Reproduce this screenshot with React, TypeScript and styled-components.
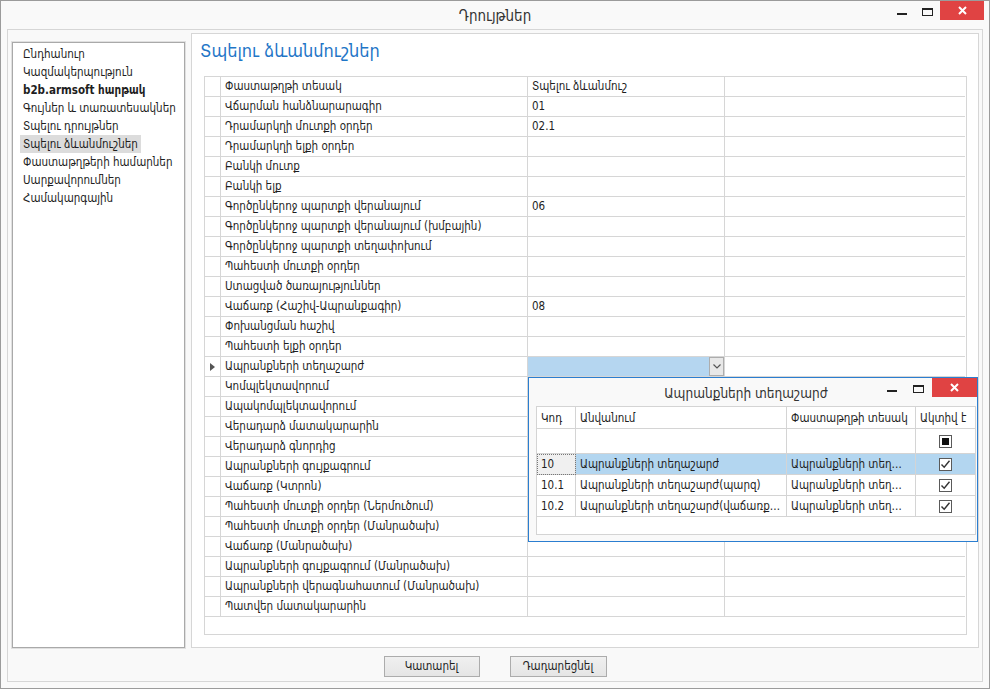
import React from 'react';
import styled, { createGlobalStyle } from 'styled-components';

const GlobalStyle = createGlobalStyle`
  html, body {
    margin: 0;
    padding: 0;
    background: #ffffff;
  }
  * {
    box-sizing: border-box;
  }
`;

const Window = styled.div`
  position: relative;
  width: 990px;
  height: 689px;
  border: 1px solid #9b9b9b;
  background: #f9f9f9;
  display: flex;
  flex-direction: column;
  font-family: 'DejaVu Sans Condensed', 'DejaVu Sans', sans-serif;
  font-stretch: condensed;
  font-size: 11.5px;
  color: #1e1e1e;
  overflow: hidden;
`;

const TitleBar = styled.div<{ $height: number }>`
  height: ${(p) => p.$height}px;
  flex: none;
  display: grid;
  grid-template-columns: 1fr auto 1fr;
  align-items: start;
`;

const TitleText = styled.div<{ $size: number; $top: number; $shift?: number }>`
  grid-column: 2;
  font-size: ${(p) => p.$size}px;
  line-height: 20px;
  padding-top: ${(p) => p.$top}px;
  margin-right: ${(p) => p.$shift ?? 0}px;
  color: #333;
  white-space: nowrap;
`;

const Controls = styled.div<{ $right: number }>`
  grid-column: 3;
  justify-self: end;
  display: flex;
  margin-right: ${(p) => p.$right}px;
`;

const CtrlButton = styled.div<{ $w: number; $close?: boolean }>`
  width: ${(p) => p.$w}px;
  height: 19px;
  display: flex;
  justify-content: center;
  background: ${(p) => (p.$close ? '#e04343' : 'transparent')};
  padding-top: ${(p) => (p.$close ? '5px' : '6px')};
`;

const Frame = styled.div`
  flex: 1;
  margin: 0 6px 6px 6px;
  border: 1px solid #d6d6d6;
  display: flex;
  flex-direction: column;
`;

const Panels = styled.div`
  height: 618px;
  padding: 3px 3px 0 3px;
  display: flex;
  gap: 6px;
`;

const LeftPanel = styled.div`
  width: 174px;
  display: flex;
  flex-direction: column;
  padding-top: 9px;
`;

const MenuList = styled.div`
  flex: 1;
  margin-left: 1px;
  border: 1px solid #a9a9a9;
  box-shadow: 0 0 0 1px #e0e0e0;
  background: #ffffff;
  padding: 2px 0 0 7px;
  display: flex;
  flex-direction: column;
  align-items: flex-start;
`;

const MenuItem = styled.div<{ $active?: boolean; $bold?: boolean }>`
  height: 18px;
  line-height: 18px;
  padding: 0 3px;
  white-space: nowrap;
  font-weight: ${(p) => (p.$bold ? 700 : 400)};
  background: ${(p) => (p.$active ? '#dcdcdc' : 'transparent')};
`;

const RightPanel = styled.div`
  width: 788px;
  border: 1px solid #d6d6d6;
  background: #ffffff;
  display: flex;
  flex-direction: column;
`;

const Heading = styled.div`
  font-size: 18px;
  line-height: 24px;
  padding: 5px 0 0 8px;
  margin-bottom: 13px;
  color: #1f76c7;
`;

const Grid = styled.div`
  margin: 0 11px 12px 12px;
  height: 559px;
  border: 1px solid #d6d6d6;
  display: grid;
  grid-template-columns: 16px 307px 197px 240px;
  grid-auto-rows: 20px;
  align-content: start;
`;

const Cell = styled.div<{ $last?: boolean; $selected?: boolean }>`
  position: relative;
  border-bottom: 1px solid #d6d6d6;
  border-right: ${(p) => (p.$last ? 'none' : '1px solid #d6d6d6')};
  padding-left: 4px;
  line-height: 19px;
  white-space: nowrap;
  overflow: hidden;
  background: ${(p) => (p.$selected ? '#b5d6f0' : 'transparent')};
`;

const RowHead = styled(Cell)`
  padding: 0;
  display: flex;
  align-items: center;
  justify-content: center;
`;

const DropButton = styled.div`
  position: absolute;
  right: 0;
  top: 0;
  width: 15px;
  height: 19px;
  border: 1px solid #adadad;
  background: #e8e8e8;
  display: flex;
  align-items: center;
  justify-content: center;
`;

const ButtonBar = styled.div`
  flex: 1;
  display: flex;
  justify-content: center;
  gap: 30px;
  padding-top: 8px;
`;

const Button = styled.div<{ $w: number }>`
  width: ${(p) => p.$w}px;
  height: 21px;
  border: 1px solid #acacac;
  background: linear-gradient(#f0f0f0, #e5e5e5);
  line-height: 19px;
  text-align: center;
`;

const Popup = styled.div`
  position: absolute;
  left: 527px;
  top: 376px;
  width: 450px;
  height: 165px;
  border: 1px solid #2b7ed0;
  background: #f9f9f9;
  display: flex;
  flex-direction: column;
`;

const PopGrid = styled.div`
  margin: 0 1px 6px 7px;
  flex: 1;
  border: 1px solid #d4d4d4;
  background: #ffffff;
  display: grid;
  grid-template-columns: 39px 211px 129px 59px;
  grid-template-rows: 22px 25px 21px 21px 21px;
  align-content: start;
  font-size: 11.5px;
`;

const PopCell = styled.div<{ $last?: boolean; $selected?: boolean; $focus?: boolean; $center?: boolean }>`
  border-bottom: 1px solid #d4d4d4;
  border-right: ${(p) => (p.$last ? 'none' : '1px solid #d4d4d4')};
  padding: 0 4px;
  display: flex;
  align-items: center;
  justify-content: ${(p) => (p.$center ? 'center' : 'flex-start')};
  white-space: nowrap;
  overflow: hidden;
  background: ${(p) => (p.$focus ? '#f0f0f0' : p.$selected ? '#b3d6f0' : 'transparent')};
  outline: ${(p) => (p.$focus ? '1px dotted #777' : 'none')};
  outline-offset: -1px;
`;

const Ellipsis = styled.span`
  overflow: hidden;
  text-overflow: ellipsis;
`;

const CheckBox = styled.div`
  width: 13px;
  height: 13px;
  border: 1px solid #5a5a5a;
  background: #ffffff;
  display: flex;
  align-items: center;
  justify-content: center;
`;

const Indeterminate = styled.div`
  width: 7px;
  height: 7px;
  background: #111;
`;

const MinIcon = () => (
  <svg width="10" height="10" viewBox="0 0 10 10">
    <rect x="0" y="6" width="10" height="2" fill="#222" />
  </svg>
);

const MaxIcon = () => (
  <svg width="11" height="10" viewBox="0 0 11 10">
    <rect x="0.5" y="1.5" width="10" height="7" fill="none" stroke="#222" />
    <rect x="0" y="1" width="11" height="2" fill="#222" />
  </svg>
);

const CloseIcon = () => (
  <svg width="9" height="9" viewBox="0 0 9 9">
    <path d="M1 1 L8 8 M8 1 L1 8" stroke="#fff" strokeWidth="2" />
  </svg>
);

const Check = () => (
  <svg width="11" height="11" viewBox="0 0 11 11">
    <path d="M1.5 5.5 L4.2 8.3 L9.5 1.8" fill="none" stroke="#333" strokeWidth="1.4" />
  </svg>
);

const Chevron = () => (
  <svg width="8" height="5" viewBox="0 0 8 5">
    <path d="M0.5 0.5 L4 4 L7.5 0.5" fill="none" stroke="#555" strokeWidth="1.2" />
  </svg>
);

const RowArrow = () => (
  <svg width="5" height="8" viewBox="0 0 5 8">
    <path d="M0 0 L5 4 L0 8 Z" fill="#555" />
  </svg>
);

const menu = [
  'Ընդհանուր',
  'Կազմակերպություն',
  'b2b.armsoft հարթակ',
  'Գույներ և տառատեսակներ',
  'Տպելու դրույթներ',
  'Տպելու ձևանմուշներ',
  'Փաստաթղթերի համարներ',
  'Սարքավորումներ',
  'Համակարգային',
];

const rows: [string, string][] = [
  ['Փաստաթղթի տեսակ', 'Տպելու ձևանմուշ'],
  ['Վճարման հանձնարարագիր', '01'],
  ['Դրամարկղի մուտքի օրդեր', '02.1'],
  ['Դրամարկղի ելքի օրդեր', ''],
  ['Բանկի մուտք', ''],
  ['Բանկի ելք', ''],
  ['Գործընկերոջ պարտքի վերանայում', '06'],
  ['Գործընկերոջ պարտքի վերանայում (խմբային)', ''],
  ['Գործընկերոջ պարտքի տեղափոխում', ''],
  ['Պահեստի մուտքի օրդեր', ''],
  ['Ստացված ծառայություններ', ''],
  ['Վաճառք (Հաշիվ-Ապրանքագիր)', '08'],
  ['Փոխանցման հաշիվ', ''],
  ['Պահեստի ելքի օրդեր', ''],
  ['Ապրանքների տեղաշարժ', ''],
  ['Կոմպլեկտավորում', ''],
  ['Ապակոմպլեկտավորում', ''],
  ['Վերադարձ մատակարարին', ''],
  ['Վերադարձ գնորդից', ''],
  ['Ապրանքների գույքագրում', ''],
  ['Վաճառք (Կտրոն)', ''],
  ['Պահեստի մուտքի օրդեր (Ներմուծում)', ''],
  ['Պահեստի մուտքի օրդեր (Մանրածախ)', ''],
  ['Վաճառք (Մանրածախ)', ''],
  ['Ապրանքների գույքագրում (Մանրածախ)', ''],
  ['Ապրանքների վերագնահատում (Մանրածախ)', ''],
  ['Պատվեր մատակարարին', ''],
];

const SELECTED = 14;

const popRows = [
  ['10', 'Ապրանքների տեղաշարժ', 'Ապրանքների տեղաշարժ'],
  ['10.1', 'Ապրանքների տեղաշարժ(պարզ)', 'Ապրանքների տեղաշարժ'],
  ['10.2', 'Ապրանքների տեղաշարժ(վաճառքի կետ)', 'Ապրանքների տեղաշարժ'],
];

export default function App() {
  return (
    <>
      <GlobalStyle />
      <Window>
        <TitleBar $height={28}>
          <TitleText $size={15} $top={5}>
            Դրույթներ
          </TitleText>
          <Controls $right={5}>
            <CtrlButton $w={25}>
              <MinIcon />
            </CtrlButton>
            <CtrlButton $w={26}>
              <MaxIcon />
            </CtrlButton>
            <CtrlButton $w={44} $close>
              <CloseIcon />
            </CtrlButton>
          </Controls>
        </TitleBar>

        <Frame>
          <Panels>
            <LeftPanel>
              <MenuList>
                {menu.map((m, i) => (
                  <MenuItem key={m} $bold={i === 2} $active={i === 5}>
                    {m}
                  </MenuItem>
                ))}
              </MenuList>
            </LeftPanel>

            <RightPanel>
              <Heading>Տպելու ձևանմուշներ</Heading>
              <Grid>
                {rows.map(([name, value], i) => (
                  <React.Fragment key={i}>
                    <RowHead>{i === SELECTED && <RowArrow />}</RowHead>
                    <Cell>{name}</Cell>
                    <Cell $selected={i === SELECTED}>
                      {value}
                      {i === SELECTED && (
                        <DropButton>
                          <Chevron />
                        </DropButton>
                      )}
                    </Cell>
                    <Cell $last />
                  </React.Fragment>
                ))}
              </Grid>
            </RightPanel>
          </Panels>

          <ButtonBar>
            <Button $w={96}>Կատարել</Button>
            <Button $w={97}>Դադարեցնել</Button>
          </ButtonBar>
        </Frame>

        <Popup>
          <TitleBar $height={28}>
            <TitleText $size={13.5} $top={5} $shift={14}>
              Ապրանքների տեղաշարժ
            </TitleText>
            <Controls $right={0}>
              <CtrlButton $w={26}>
                <MinIcon />
              </CtrlButton>
              <CtrlButton $w={27}>
                <MaxIcon />
              </CtrlButton>
              <CtrlButton $w={45} $close>
                <CloseIcon />
              </CtrlButton>
            </Controls>
          </TitleBar>
          <PopGrid>
            <PopCell>Կոդ</PopCell>
            <PopCell>Անվանում</PopCell>
            <PopCell>Փաստաթղթի տեսակ</PopCell>
            <PopCell $last>Ակտիվ է</PopCell>

            <PopCell />
            <PopCell />
            <PopCell />
            <PopCell $last $center>
              <CheckBox>
                <Indeterminate />
              </CheckBox>
            </PopCell>

            {popRows.map(([code, name, type], i) => (
              <React.Fragment key={code}>
                <PopCell $focus={i === 0}>{code}</PopCell>
                <PopCell $selected={i === 0}>
                  <Ellipsis>{name}</Ellipsis>
                </PopCell>
                <PopCell $selected={i === 0}>
                  <Ellipsis>{type}</Ellipsis>
                </PopCell>
                <PopCell $last $center $selected={i === 0}>
                  <CheckBox>
                    <Check />
                  </CheckBox>
                </PopCell>
              </React.Fragment>
            ))}
          </PopGrid>
        </Popup>
      </Window>
    </>
  );
}
